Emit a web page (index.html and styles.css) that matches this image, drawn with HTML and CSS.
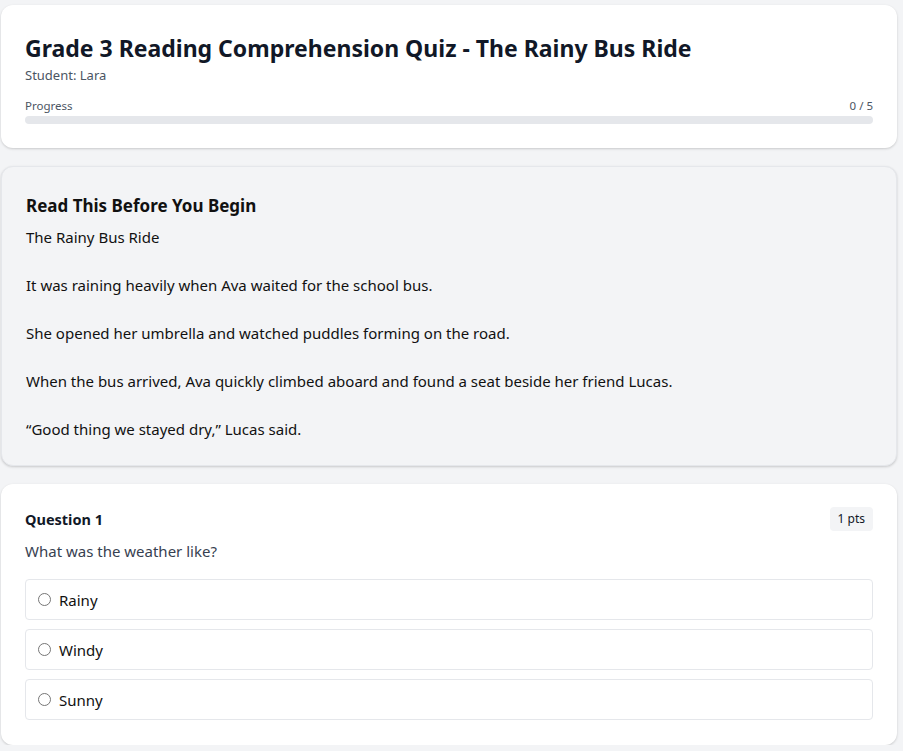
FILE: index.html
```html
<!DOCTYPE html>
<html lang="en">
<head>
<meta charset="utf-8">
<title>Grade 3 Reading Comprehension Quiz</title>
<link rel="stylesheet" href="styles.css">
</head>
<body>
<div class="page">
  <header class="card head">
    <h1 class="title">Grade 3 Reading Comprehension Quiz - The Rainy Bus Ride</h1>
    <div class="student">Student: Lara</div>
    <div class="progress-row">
      <span>Progress</span>
      <span>0 / 5</span>
    </div>
    <div class="bar"><div class="fill" style="width:0%"></div></div>
  </header>

  <section class="card passage">
    <h2 class="passage-title">Read This Before You Begin</h2>
    <div class="passage-text">The Rainy Bus Ride

It was raining heavily when Ava waited for the school bus.

She opened her umbrella and watched puddles forming on the road.

When the bus arrived, Ava quickly climbed aboard and found a seat beside her friend Lucas.

“Good thing we stayed dry,” Lucas said.</div>
  </section>

  <section class="card question">
    <div class="q-head">
      <h3 class="q-title">Question 1</h3>
      <span class="pts">1 pts</span>
    </div>
    <p class="q-text">What was the weather like?</p>
    <div class="options">
      <label class="option"><span class="radio"></span><span>Rainy</span></label>
      <label class="option"><span class="radio"></span><span>Windy</span></label>
      <label class="option"><span class="radio"></span><span>Sunny</span></label>
    </div>
  </section>
</div>
</body>
</html>
```

FILE: styles.css
```css
* { box-sizing: border-box; }
html, body { margin: 0; padding: 0; }
body {
  background: #f3f4f6;
  font-family: "Noto Sans", "Open Sans", sans-serif;
  color: #111827;
}
.page {
  width: 896px;
  margin-left: 1px;
  padding-top: 5px;
  display: flex;
  flex-direction: column;
  gap: 18px;
}
.card {
  background: #fff;
  border-radius: 12px;
  box-shadow: 0 1px 3px rgba(0,0,0,0.12), 0 1px 2px rgba(0,0,0,0.06);
}
.head { padding: 28px 24px 24px; }
.title {
  margin: 0;
  font-size: 23px;
  line-height: 30px;
  font-weight: 700;
  color: #111827;
}
.student {
  margin-top: 3px;
  font-size: 13px;
  line-height: 18px;
  color: #4b5563;
}
.progress-row {
  margin-top: 14px;
  display: flex;
  justify-content: space-between;
  font-size: 11.5px;
  line-height: 16px;
  color: #4b5563;
}
.bar {
  margin-top: 2px;
  height: 8px;
  border-radius: 4px;
  background: #e5e7eb;
  overflow: hidden;
}
.fill { height: 100%; background: #3b82f6; }

.passage {
  background: #f3f4f6;
  border: 1px solid #e5e7eb;
  padding: 27px 24px 24px;
}
.passage-title {
  margin: 0 0 7px;
  font-size: 17px;
  line-height: 24px;
  font-weight: 700;
  color: #111;
}
.passage-text {
  white-space: pre-line;
  font-size: 15px;
  line-height: 24px;
  color: #111;
}

.question { padding: 23px 24px 25px; }
.q-head {
  display: flex;
  justify-content: space-between;
  align-items: center;
}
.q-title {
  margin: 0;
  font-size: 14.5px;
  line-height: 24px;
  font-weight: 700;
  color: #111827;
}
.pts {
  background: #f3f4f6;
  border-radius: 4px;
  padding: 3px 8px;
  font-size: 12px;
  line-height: 18px;
  color: #111827;
}
.q-text {
  margin: 9px 0 17px;
  font-size: 15px;
  line-height: 22px;
  color: #374151;
}
.options {
  display: flex;
  flex-direction: column;
  gap: 9px;
}
.option {
  display: flex;
  align-items: center;
  gap: 8px;
  height: 41px;
  padding: 0 12px;
  border: 1px solid #e5e7eb;
  border-radius: 4px;
  font-size: 15px;
  color: #111;
}
.radio {
  width: 13px;
  height: 13px;
  border: 1px solid #767676;
  border-radius: 50%;
  background: #fff;
  flex: none;
}
```
